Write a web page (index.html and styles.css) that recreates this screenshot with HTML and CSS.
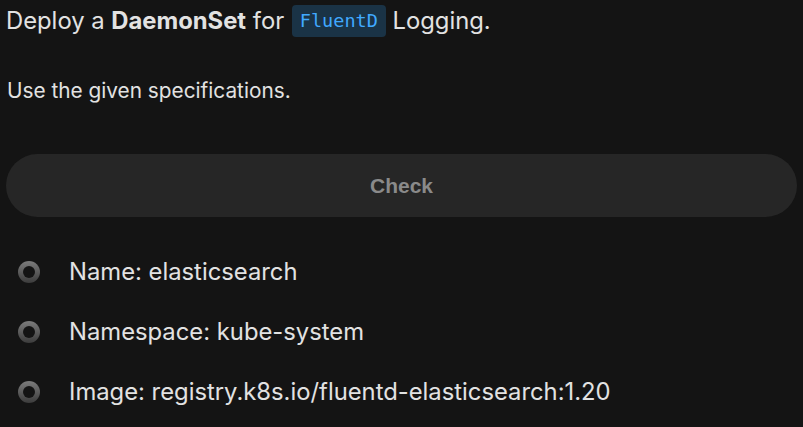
FILE: index.html
```html
<!DOCTYPE html>
<html>
<head>
<meta charset="utf-8">
<link rel="stylesheet" href="styles.css">
</head>
<body>
<div class="task">
  <h1 class="title">Deploy a <strong>DaemonSet</strong> for <code class="code">FluentD</code> Logging.</h1>
  <p class="desc">Use the given specifications.</p>
  <button class="check">Check</button>
  <ul class="specs">
    <li class="spec"><span class="dot"></span><span class="label">Name: elasticsearch</span></li>
    <li class="spec"><span class="dot"></span><span class="label">Namespace: kube-system</span></li>
    <li class="spec"><span class="dot"></span><span class="label">Image: registry.k8s.io/fluentd-elasticsearch:1.20</span></li>
  </ul>
</div>
</body>
</html>
```

FILE: styles.css
```css
html, body {
  margin: 0;
  background: #141414;
}
body {
  font-family: Inter, "Noto Sans", sans-serif;
  color: #e2e2e2;
}
.task {
  padding: 5px 6px 0 6px;
}
.title {
  margin: 0;
  font-size: 23.8px;
  font-weight: 400;
  line-height: 32px;
  display: flex;
  align-items: center;
  white-space: pre;
}
.title strong {
  font-weight: 700;
}
.code {
  font-family: "DejaVu Sans Mono", monospace;
  font-size: 18.5px;
  color: #40a9ff;
  background: #1a3346;
  border-radius: 4px;
  padding: 0 8px;
  line-height: 32px;
  margin: 0 0 0 1px;
}
.desc {
  margin: 41px 0 0 1px;
  font-size: 20.8px;
  line-height: 26px;
}
.check {
  display: block;
  width: 100%;
  margin-top: 50px;
  height: 63px;
  border: none;
  border-radius: 32px;
  background: #262626;
  color: #8a8a8a;
  font-family: "Liberation Sans", Arial, sans-serif;
  font-weight: 700;
  font-size: 21px;
}
.specs {
  list-style: none;
  margin: 25px 0 0 0;
  padding: 0 0 0 12px;
}
.spec {
  display: flex;
  align-items: center;
  height: 60px;
  font-size: 23.8px;
}
.dot {
  width: 22px;
  height: 22px;
  box-sizing: border-box;
  border-radius: 50%;
  border: 5px solid transparent;
  background: linear-gradient(#141414, #141414) padding-box, linear-gradient(#7c7c7c, #3c3c3c) border-box;
  margin-right: 29px;
  flex: none;
}
.label {
  line-height: 30px;
}
```
